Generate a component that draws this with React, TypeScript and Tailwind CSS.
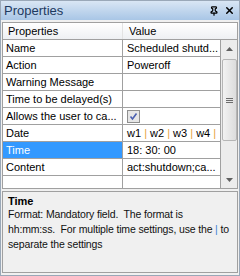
import { Pin, X } from 'lucide-react';

const font = { fontFamily: '"Liberation Sans", Arial, sans-serif' };

const rows = [
    { name: 'Name', value: 'Scheduled shutd...' },
    { name: 'Action', value: 'Poweroff' },
    { name: 'Warning Message', value: '' },
    { name: 'Time to be delayed(s)', value: '' },
    { name: 'Allows the user to ca...', value: 'check' },
    { name: 'Date', value: 'date' },
    { name: 'Time', value: '18: 30: 00', selected: true },
    { name: 'Content', value: 'act:shutdown;ca...' },
    { name: '', value: '' },
];

const Pipe = () => <span className="text-[#e8a33a]">|</span>;

const App = () => {
    return (
        <div
            className="w-[240px] h-[276px] bg-[#f0f0f0] border border-[#9aa8b8] flex flex-col text-[11px] text-black overflow-hidden"
            style={font}
        >
            {/* Title */}
            <div className="h-[19px] shrink-0 flex items-center justify-between pl-[3px] pr-[4px] bg-gradient-to-b from-[#d9e6f4] to-[#a9c6e6] text-[#1e3a5f] text-[13px]">
                <span>Properties</span>
                <div className="flex items-center gap-[5px]">
                    <Pin size={10} strokeWidth={3} className="text-black" />
                    <X size={11} strokeWidth={3.2} className="text-black" />
                </div>
            </div>

            {/* Grid */}
            <div className="mt-[2px] mx-[1px] h-[167px] shrink-0 border border-[#a0a0a0] bg-white flex flex-col overflow-hidden">
                <div className="h-[17px] shrink-0 flex bg-gradient-to-b from-[#ffffff] to-[#eef0f3] border-b border-[#a0a0a0]">
                    <div className="w-[120px] pl-[5px] flex items-center border-r border-[#e3e3e3]">Properties</div>
                    <div className="pl-[6px] flex items-center">Value</div>
                </div>
                <div className="flex flex-1 min-h-0">
                    <div className="flex-1 flex flex-col overflow-hidden">
                        {rows.map((row, i) => (
                            <div key={i} className="h-[17px] shrink-0 flex border-b border-[#a0a0a0]">
                                <div
                                    className={`w-[120px] pl-[3px] pt-[1px] flex items-center border-r border-[#a0a0a0] whitespace-nowrap ${row.selected ? 'bg-[#3399ff] text-white' : ''}`}
                                >
                                    {row.name}
                                </div>
                                <div className="flex-1 pl-[4px] pt-[1px] flex items-center whitespace-nowrap border-r border-[#a0a0a0]">
                                    {row.value === 'check' ? (
                                        <span className="w-[13px] h-[13px] border border-[#8f8f8f] bg-[#e6e6e6] flex items-center justify-center">
                                            <svg width="9" height="9" viewBox="0 0 9 9">
                                                <path d="M1.5 4.5 L3.5 7 L7.5 1.5" fill="none" stroke="#4a5fb0" strokeWidth="1.6" />
                                            </svg>
                                        </span>
                                    ) : row.value === 'date' ? (
                                        <span>
                                            w1 <Pipe /> w2 <Pipe /> w3 <Pipe /> w4 <Pipe />
                                        </span>
                                    ) : (
                                        row.value
                                    )}
                                </div>
                            </div>
                        ))}
                    </div>

                    {/* Scrollbar */}
                    <div className="w-[16px] shrink-0 bg-[#ececec] flex flex-col items-center">
                        <div className="h-[17px] w-full flex items-center justify-center">
                            <svg width="7" height="4" viewBox="0 0 7 4"><path d="M0 4 L3.5 0 L7 4 Z" fill="#606060" /></svg>
                        </div>
                        <div className="mt-[2px] h-[82px] w-[15px] rounded-[2px] border border-[#b5b5b5] bg-gradient-to-r from-[#f2f2f2] to-[#dcdcdc] flex flex-col items-center justify-center gap-[1px]">
                            <div className="w-[7px] h-[1px] bg-[#6d6d6d]" />
                            <div className="w-[7px] h-[1px] bg-[#6d6d6d]" />
                            <div className="w-[7px] h-[1px] bg-[#6d6d6d]" />
                        </div>
                        <div className="flex-1" />
                        <div className="h-[17px] w-full flex items-center justify-center">
                            <svg width="7" height="4" viewBox="0 0 7 4"><path d="M0 0 L3.5 4 L7 0 Z" fill="#606060" /></svg>
                        </div>
                    </div>
                </div>
            </div>

            {/* Description */}
            <div className="mt-[2px] mx-[1px] h-[82px] shrink-0 border border-[#a0a0a0] pl-[5px] pt-[3px] leading-[15px] whitespace-nowrap">
                <div className="font-bold leading-[12px]">Time</div>
                <div className="text-[#111] text-[10.5px] tracking-[-0.15px]">
                    Format: Mandatory field.&nbsp; The format is
                    <br />
                    hh:mm:ss.&nbsp; For multiple time settings, use the <span className="text-[#3d7fd6]">|</span> to
                    <br />
                    separate the settings
                </div>
            </div>
        </div>
    );
};

export default App;
